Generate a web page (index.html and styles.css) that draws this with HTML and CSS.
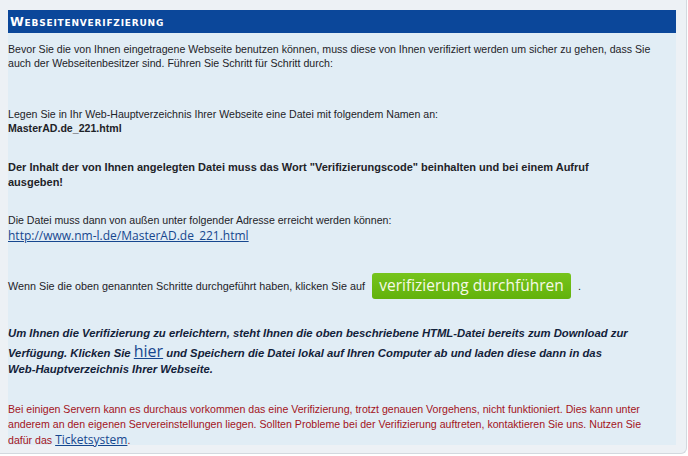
FILE: index.html
```html
<!DOCTYPE html>
<html lang="de">
<head>
<meta charset="utf-8">
<title>Webseitenverifizierung</title>
<link rel="stylesheet" href="styles.css">
</head>
<body>
<div class="panel">
  <div class="box">
    <h1 class="title">Webseitenverifzierung</h1>
    <p class="p-intro">Bevor Sie die von Ihnen eingetragene Webseite benutzen können, muss diese von Ihnen verifiziert werden um sicher zu gehen, dass Sie auch der Webseitenbesitzer sind. Führen Sie Schritt für Schritt durch:</p>
    <p class="p-legen">Legen Sie in Ihr Web-Hauptverzeichnis Ihrer Webseite eine Datei mit folgendem Namen an:<br><b class="file">MasterAD.de_221.html</b></p>
    <p class="p-inhalt">Der Inhalt der von Ihnen angelegten Datei muss das Wort "Verifizierungscode" beinhalten und bei einem Aufruf<br>ausgeben!</p>
    <p class="p-datei">Die Datei muss dann von außen unter folgender Adresse erreicht werden können:<br><a class="url" href="#">http://www.nm-l.de/MasterAD.de_221.html</a></p>
    <p class="p-wenn">Wenn Sie die oben genannten Schritte durchgeführt haben, klicken Sie auf <a class="btn" href="#">verifizierung durchführen</a> .</p>
    <p class="p-hint">Um Ihnen die Verifizierung zu erleichtern, steht Ihnen die oben beschriebene HTML-Datei bereits zum Download zur Verfügung. Klicken Sie <a class="hier" href="#">hier</a> und Speichern die Datei lokal auf Ihren Computer ab und laden diese dann in das <span class="nowrap">Web-Hauptverzeichnis</span> Ihrer Webseite.</p>
    <p class="p-warn">Bei einigen Servern kann es durchaus vorkommen das eine Verifizierung, trotzt genauen Vorgehens, nicht funktioniert. Dies kann unter anderem an den eigenen Servereinstellungen liegen. Sollten Probleme bei der Verifizierung auftreten, kontaktieren Sie uns. Nutzen Sie<br>dafür das <a class="ticket" href="#">Ticketsystem</a>.</p>
  </div>
</div>
</body>
</html>
```
FILE: styles.css
```css
html, body {
  margin: 0;
  padding: 0;
  background: #ffffff;
}
body {
  font-family: "Liberation Sans", Arial, sans-serif;
  font-size: 10.6px;
  line-height: 14px;
  color: #1e2328;
}
.panel {
  box-sizing: border-box;
  width: 687px;
  height: 454px;
  background: #edf1f5;
  border-right: 1px solid #d3d9df;
  border-bottom: 1px solid #d3d9df;
  border-bottom-right-radius: 6px;
  padding: 10px 10px 8px 8px;
}
.box {
  background: #e1edf5;
  height: 100%;
  display: flex;
  flex-direction: column;
}
.title {
  margin: 0;
  height: 25px;
  background: #0b479a;
  color: #ffffff;
  font-family: "DejaVu Sans", Verdana, sans-serif;
  font-weight: bold;
  font-size: 12.5px;
  line-height: 23px;
  font-variant: small-caps;
  padding-left: 2px;
  letter-spacing: 0.8px;
}
p {
  margin: 0;
}
.nowrap {
  white-space: nowrap;
}
.p-intro {
  margin-top: 9px;
}
.p-legen {
  margin-top: 37px;
}
.file {
  font-weight: bold;
}
.p-inhalt {
  margin-top: 25px;
  font-size: 11px;
  font-weight: bold;
  line-height: 15px;
}
.p-datei {
  margin-top: 23px;
}
.url {
  font-family: "Open Sans", sans-serif;
  font-size: 12px;
  line-height: 17px;
  color: #16478f;
  text-decoration: underline;
}
.p-wenn {
  margin-top: 29px;
  display: flex;
  align-items: center;
  white-space: pre;
  font-size: 10.8px;
}
.btn {
  display: inline-block;
  margin: 0 4px 0 4px;
  width: 199px;
  height: 26px;
  box-sizing: border-box;
  border-radius: 3px;
  background: linear-gradient(#76c41c, #62b20b);
  color: #f6f9e6;
  font-family: "Open Sans", sans-serif;
  font-size: 15.5px;
  line-height: 25px;
  text-align: center;
  text-decoration: none;
}
.p-hint {
  margin-top: 27px;
  font-size: 11.3px;
  font-weight: bold;
  font-style: italic;
  color: #13223a;
  line-height: 14px;
}
.hier {
  font-family: "Open Sans", sans-serif;
  font-size: 16px;
  font-weight: normal;
  font-style: normal;
  color: #16478f;
  text-decoration: underline;
  line-height: 22px;
}
.p-warn {
  margin-top: 26px;
  color: #a3141c;
  line-height: 15px;
}
.ticket {
  font-family: "Open Sans", sans-serif;
  font-size: 12px;
  color: #16478f;
  text-decoration: underline;
}
```
